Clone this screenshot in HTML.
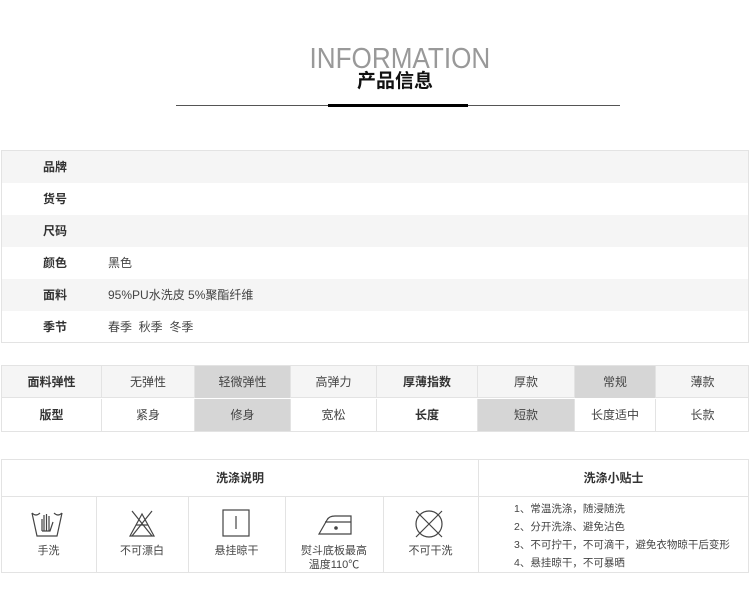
<!DOCTYPE html>
<html><head><meta charset="utf-8"><style>
*{margin:0;padding:0;box-sizing:border-box}
body{width:750px;height:613px;background:#fff;position:relative;font-family:"Liberation Sans","Noto Sans CJK SC",sans-serif;color:#333;overflow:hidden}
.a{position:absolute}
.t1{left:1px;top:150px;width:748px;height:193px;border:1px solid #e3e3e3}
.r{position:absolute;left:0;width:746px;height:32px;font-size:12px;line-height:32px}
.r b{position:absolute;left:41px;font-weight:bold;color:#333}
.r span{position:absolute;left:106px;color:#444}
.g{background:#f5f5f5}
.c{position:absolute;text-align:center;font-size:12px;color:#444;border-right:1px solid #e3e3e3}
.ic{position:absolute;top:509px}
.lb{position:absolute;top:544px;font-size:11px;color:#444;text-align:center;line-height:14px}
</style></head><body>
<div class="a" style="left:300px;width:190px;top:43px;text-align:center;font-size:29px;color:#999;font-weight:normal;line-height:32px;transform:scaleX(0.9);transform-origin:center">INFORMATION</div>
<div class="a" style="left:0;width:790px;top:70px;text-align:center;font-size:19px;font-weight:bold;color:#111;line-height:24px">产品信息</div>
<div class="a" style="left:176px;top:105px;width:444px;height:1px;background:#555"></div>
<div class="a" style="left:328px;top:104px;width:140px;height:3px;background:#000"></div>

<div class="a t1">
<div class="r g" style="top:0"><b>品牌</b></div>
<div class="r" style="top:32px"><b>货号</b></div>
<div class="r g" style="top:64px"><b>尺码</b></div>
<div class="r" style="top:96px"><b>颜色</b><span>黑色</span></div>
<div class="r g" style="top:128px"><b>面料</b><span>95%PU水洗皮 5%聚酯纤维</span></div>
<div class="r" style="top:160px"><b>季节</b><span>春季&nbsp;&nbsp;秋季&nbsp;&nbsp;冬季</span></div>
</div>

<div class="a" style="left:1px;top:365px;width:748px;height:67px;border:1px solid #e3e3e3;background:#fff">
<div class="a g" style="left:0;top:0;width:746px;height:32px;border-bottom:1px solid #e3e3e3"></div>
</div>
<div class="c" style="left:2px;top:366px;width:100px;height:32px;line-height:32px;font-weight:bold;color:#333">面料弹性</div>
<div class="c" style="left:102px;top:366px;width:93px;height:32px;line-height:32px">无弹性</div>
<div class="c" style="left:195px;top:366px;width:96px;height:32px;line-height:32px;background:#d6d6d6">轻微弹性</div>
<div class="c" style="left:291px;top:366px;width:86px;height:32px;line-height:32px">高弹力</div>
<div class="c" style="left:377px;top:366px;width:101px;height:32px;line-height:32px;font-weight:bold;color:#333">厚薄指数</div>
<div class="c" style="left:478px;top:366px;width:97px;height:32px;line-height:32px">厚款</div>
<div class="c" style="left:575px;top:366px;width:81px;height:32px;line-height:32px;background:#d6d6d6">常规</div>
<div class="c" style="left:656px;top:366px;width:93px;height:32px;line-height:32px;border:none">薄款</div>
<div class="c" style="left:2px;top:399px;width:100px;height:32px;line-height:32px;font-weight:bold;color:#333">版型</div>
<div class="c" style="left:102px;top:399px;width:93px;height:32px;line-height:32px">紧身</div>
<div class="c" style="left:195px;top:399px;width:96px;height:32px;line-height:32px;background:#d6d6d6">修身</div>
<div class="c" style="left:291px;top:399px;width:86px;height:32px;line-height:32px">宽松</div>
<div class="c" style="left:377px;top:399px;width:101px;height:32px;line-height:32px;font-weight:bold;color:#333">长度</div>
<div class="c" style="left:478px;top:399px;width:97px;height:32px;line-height:32px;background:#d6d6d6">短款</div>
<div class="c" style="left:575px;top:399px;width:81px;height:32px;line-height:32px">长度适中</div>
<div class="c" style="left:656px;top:399px;width:93px;height:32px;line-height:32px;border:none">长款</div>

<div class="a" style="left:1px;top:459px;width:748px;height:114px;border:1px solid #e3e3e3"></div>
<div class="a" style="left:1px;top:496px;width:748px;height:1px;background:#e3e3e3"></div>
<div class="a" style="left:478px;top:459px;width:1px;height:114px;background:#e3e3e3"></div>
<div class="a" style="left:96px;top:496px;width:1px;height:77px;background:#e3e3e3"></div>
<div class="a" style="left:188px;top:496px;width:1px;height:77px;background:#e3e3e3"></div>
<div class="a" style="left:285px;top:496px;width:1px;height:77px;background:#e3e3e3"></div>
<div class="a" style="left:383px;top:496px;width:1px;height:77px;background:#e3e3e3"></div>
<div class="a" style="left:1px;width:478px;top:470px;text-align:center;font-size:12px;font-weight:bold;line-height:16px">洗涤说明</div>
<div class="a" style="left:478px;width:271px;top:470px;text-align:center;font-size:12px;font-weight:bold;line-height:16px">洗涤小贴士</div>

<svg class="ic" style="left:31px" width="32" height="30" viewBox="0 0 32 30" fill="none" stroke="#444" stroke-width="1.2"><path d="M1 4 L6 27 H26 L31 4"/><path d="M1 4 Q5 8 9 4"/><path d="M23 4 Q27 8 31 4"/><path d="M11 22 V10 M13 22 V6 M15.5 22 V5 M18 22 V7 M11 22 H19 L22 13"/></svg>
<svg class="ic" style="left:128px" width="28" height="28" viewBox="0 0 28 28" fill="none" stroke="#444" stroke-width="1.2"><path d="M14 5 L2 27 H26 Z M8 16 L20 16"/><path d="M4 2 L24 27 M24 2 L4 27"/></svg>
<svg class="ic" style="left:222px" width="28" height="28" viewBox="0 0 28 28" fill="none" stroke="#444" stroke-width="1.2"><rect x="1" y="1" width="26" height="26"/><path d="M14 7 V20"/></svg>
<svg class="ic" style="left:318px" width="36" height="28" viewBox="0 0 36 28" fill="none" stroke="#444" stroke-width="1.2"><path d="M1 25 L9 11 Q11 7 17 7 H33 V25 Z"/><path d="M7 13 H33"/><circle cx="18" cy="19" r="1.2" fill="#444"/></svg>
<svg class="ic" style="left:413px" width="32" height="30" viewBox="0 0 32 30" fill="none" stroke="#444" stroke-width="1.2"><circle cx="16" cy="15" r="13"/><path d="M3 2 L29 28 M29 2 L3 28"/></svg>

<div class="lb" style="left:1px;width:95px">手洗</div>
<div class="lb" style="left:96px;width:92px">不可漂白</div>
<div class="lb" style="left:188px;width:97px">悬挂晾干</div>
<div class="lb" style="left:285px;width:98px">熨斗底板最高<br>温度110℃</div>
<div class="lb" style="left:383px;width:95px">不可干洗</div>

<div class="a" style="left:514px;top:500px;font-size:10.5px;line-height:18px;color:#444">1、常温洗涤，随浸随洗<br>2、分开洗涤、避免沾色<br>3、不可拧干，不可滴干，避免衣物晾干后变形<br>4、悬挂晾干，不可暴晒</div>
</body></html>
